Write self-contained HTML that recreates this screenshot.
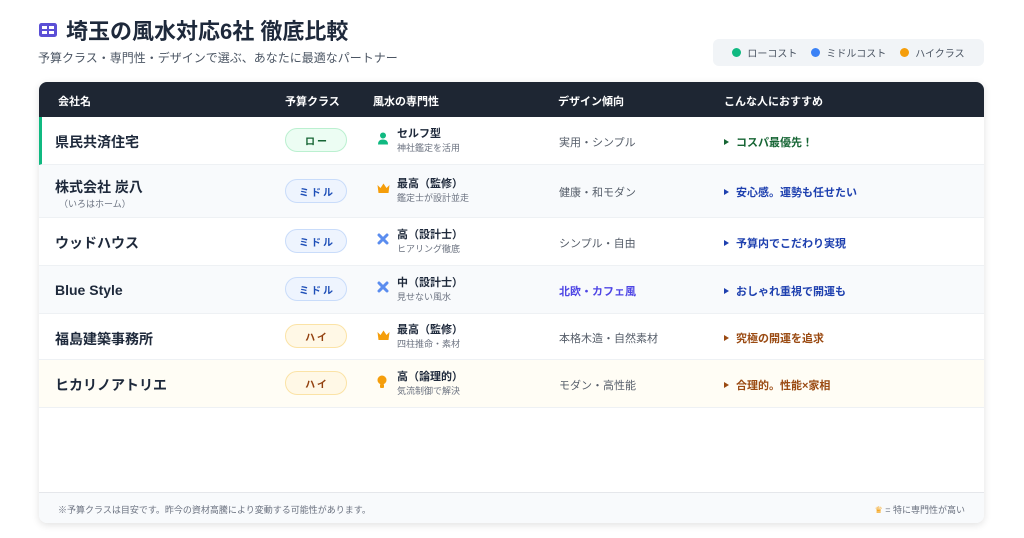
<!DOCTYPE html>
<html><head><meta charset="utf-8"><style>
*{margin:0;padding:0;box-sizing:border-box}
body{width:1024px;height:538px;background:#fff;font-family:"Liberation Sans","Noto Sans CJK JP",sans-serif;color:#1f2937;position:relative;overflow:hidden}
.title{position:absolute;left:38px;top:14px;font-size:22px;font-weight:700;color:#1e293b;display:flex;align-items:center;gap:8px}
.sub{position:absolute;left:38px;top:49px;font-size:12px;color:#4b5563}
.legend{position:absolute;left:713px;top:39px;width:271px;height:27px;background:#f1f4f7;border-radius:6px;font-size:10px;color:#4b5563;display:flex;align-items:center;justify-content:center;gap:14px}
.legend span{display:flex;align-items:center;gap:6px}
.dot{width:9px;height:9px;border-radius:50%;display:inline-block}
.card{position:absolute;left:39px;top:82px;width:945px;height:441px;border-radius:8px;box-shadow:0 2px 8px rgba(0,0,0,.12);overflow:hidden;background:#fff}
.hd{height:35px;background:#1e2633;color:#fff;font-size:11px;font-weight:700;position:relative}
.hd div,.row>div{position:absolute}
.row{position:relative;border-bottom:1px solid #eef1f4}
.nm{left:16px;font-size:14px;font-weight:700;color:#1e293b}
.bd{left:246px;width:62px;height:24px;border-radius:12px;font-size:10px;font-weight:700;display:flex;align-items:center;justify-content:center;letter-spacing:2px;padding-left:2px}
.lo{background:#ecfdf3;border:1px solid #bbf0d0;color:#166534}
.mi{background:#eef4fe;border:1px solid #c9dcfa;color:#1e4fb8}
.hi{background:#fff8e6;border:1px solid #fbe3a6;color:#92400e}
.ic{left:338px;font-size:13px}
.sp{left:358px;font-size:11px;font-weight:700;color:#1e293b;line-height:14px}
.sp small{display:block;font-size:9px;font-weight:400;color:#6b7280}
.ds{left:520px;font-size:11px;color:#555d69}
.rc{left:685px;font-size:11px;font-weight:700}
.rc:before{content:"";display:inline-block;border-left:5px solid currentColor;border-top:3.5px solid transparent;border-bottom:3.5px solid transparent;margin-right:7px;vertical-align:1px}
.ft{position:absolute;left:0;top:410px;width:100%;height:31px;background:#f8fafc;border-top:1px solid #e5e7eb;font-size:9px;color:#6b7280}
</style></head><body>
<div class="title"><svg width="20" height="16" viewBox="0 0 20 16"><rect x="1" y="1" width="18" height="14" rx="2.5" fill="#5b4fd6"/><rect x="4" y="4" width="5" height="3" fill="#fff"/><rect x="11" y="4" width="5" height="3" fill="#fff"/><rect x="4" y="9" width="5" height="3" fill="#fff"/><rect x="11" y="9" width="5" height="3" fill="#fff"/></svg>埼玉の風水対応6社 徹底比較</div>
<div class="sub">予算クラス・専門性・デザインで選ぶ、あなたに最適なパートナー</div>
<div class="legend"><span><i class="dot" style="background:#10b981"></i>ローコスト</span><span><i class="dot" style="background:#3b82f6"></i>ミドルコスト</span><span><i class="dot" style="background:#f59e0b"></i>ハイクラス</span></div>
<div class="card">
<div class="hd"><div style="left:19px;top:11px">会社名</div><div style="left:246px;top:11px">予算クラス</div><div style="left:334px;top:11px">風水の専門性</div><div style="left:519px;top:11px">デザイン傾向</div><div style="left:685px;top:11px">こんな人におすすめ</div></div>

<div class="row" style="height:48px;border-left:3px solid #10b981">
<div class="nm" style="top:15px;left:13px">県民共済住宅</div><div class="bd lo" style="top:11px;left:243px">ロー</div>
<div class="ic" style="top:15px;left:335px;color:#10b981">
<svg width="12" height="13" viewBox="0 0 12 13"><circle cx="6" cy="3.5" r="3" fill="#10b981"/><path d="M1 12.5 Q1 7.5 6 7.5 Q11 7.5 11 12.5Z" fill="#10b981"/></svg></div>
<div class="sp" style="top:10px;left:355px">セルフ型<small>神社鑑定を活用</small></div>
<div class="ds" style="top:17px;left:517px">実用・シンプル</div><div class="rc" style="top:17px;left:682px;color:#166534">コスパ最優先！</div></div>

<div class="row" style="height:53px;background:#f8fafc">
<div class="nm" style="top:12px">株式会社 炭八<small style="display:block;font-size:9px;font-weight:400;color:#6b7280;margin-left:4px">（いろはホーム）</small></div><div class="bd mi" style="top:14px">ミドル</div>
<div class="ic" style="top:17px"><svg width="13" height="11" viewBox="0 0 13 11"><path d="M0.5 2 L3.5 5 L6.5 0.5 L9.5 5 L12.5 2 L11.5 10 L1.5 10Z" fill="#f59e0b"/></svg></div>
<div class="sp" style="top:12px">最高（監修）<small>鑑定士が設計並走</small></div>
<div class="ds" style="top:19px">健康・和モダン</div><div class="rc" style="top:19px;color:#1e40af">安心感。運勢も任せたい</div></div>

<div class="row" style="height:48px">
<div class="nm" style="top:15px">ウッドハウス</div><div class="bd mi" style="top:11px">ミドル</div>
<div class="ic" style="top:15px"><svg width="12" height="12" viewBox="0 0 12 12"><path d="M2 2 L10 10 M10 2 L2 10" stroke="#5b8def" stroke-width="3" stroke-linecap="round"/></svg></div>
<div class="sp" style="top:10px">高（設計士）<small>ヒアリング徹底</small></div>
<div class="ds" style="top:17px">シンプル・自由</div><div class="rc" style="top:17px;color:#1e40af">予算内でこだわり実現</div></div>

<div class="row" style="height:48px;background:#f8fafc">
<div class="nm" style="top:16px">Blue Style</div><div class="bd mi" style="top:11px">ミドル</div>
<div class="ic" style="top:15px"><svg width="12" height="12" viewBox="0 0 12 12"><path d="M2 2 L10 10 M10 2 L2 10" stroke="#5b8def" stroke-width="3" stroke-linecap="round"/></svg></div>
<div class="sp" style="top:10px">中（設計士）<small>見せない風水</small></div>
<div class="ds" style="top:17px;color:#4f46e5;font-weight:700">北欧・カフェ風</div><div class="rc" style="top:17px;color:#1e40af">おしゃれ重視で開運も</div></div>

<div class="row" style="height:46px">
<div class="nm" style="top:15px">福島建築事務所</div><div class="bd hi" style="top:10px">ハイ</div>
<div class="ic" style="top:15px"><svg width="13" height="11" viewBox="0 0 13 11"><path d="M0.5 2 L3.5 5 L6.5 0.5 L9.5 5 L12.5 2 L11.5 10 L1.5 10Z" fill="#f59e0b"/></svg></div>
<div class="sp" style="top:9px">最高（監修）<small>四柱推命・素材</small></div>
<div class="ds" style="top:16px">本格木造・自然素材</div><div class="rc" style="top:16px;color:#9a4a12">究極の開運を追求</div></div>

<div class="row" style="height:48px;background:#fffdf5">
<div class="nm" style="top:15px">ヒカリノアトリエ</div><div class="bd hi" style="top:11px">ハイ</div>
<div class="ic" style="top:15px"><svg width="10" height="14" viewBox="0 0 10 14"><circle cx="5" cy="5" r="4.5" fill="#f59e0b"/><rect x="3" y="9" width="4" height="4" rx="1" fill="#f59e0b"/></svg></div>
<div class="sp" style="top:10px">高（論理的）<small>気流制御で解決</small></div>
<div class="ds" style="top:17px">モダン・高性能</div><div class="rc" style="top:17px;color:#9a4a12">合理的。性能×家相</div></div>

<div class="ft"><span style="position:absolute;left:19px;top:10px">※予算クラスは目安です。昨今の資材高騰により変動する可能性があります。</span><span style="position:absolute;right:19px;top:10px"><span style="color:#f59e0b">♛</span> = 特に専門性が高い</span></div>
</div>
</body></html>
